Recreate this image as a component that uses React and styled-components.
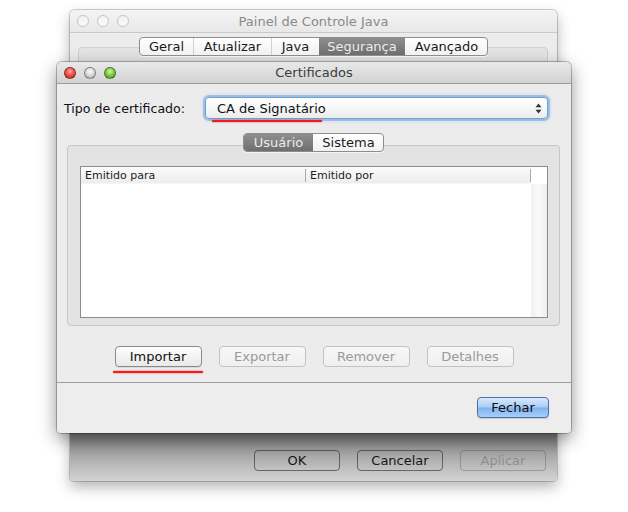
import React from 'react';
import styled, { createGlobalStyle, css } from 'styled-components';

const GlobalStyle = createGlobalStyle`
  html, body {
    margin: 0;
    padding: 0;
    background: #ffffff;
  }
  body {
    font-family: "DejaVu Sans", "Liberation Sans", sans-serif;
    -webkit-font-smoothing: antialiased;
  }
`;

const Desktop = styled.div`
  position: relative;
  width: 628px;
  height: 512px;
  overflow: hidden;
  background: #fff;
`;

const Window = styled.div`
  position: absolute;
  left: ${p => p.$left}px;
  top: ${p => p.$top}px;
  width: ${p => p.$width}px;
  height: ${p => p.$height}px;
  box-sizing: border-box;
  display: flex;
  flex-direction: column;
  background: #ececec;
  border-radius: 5px 5px 4px 4px;
  box-shadow: ${p => p.$front
    ? '0 6px 18px rgba(0,0,0,0.45), 0 0 0 1px rgba(0,0,0,0.25)'
    : '0 6px 14px rgba(0,0,0,0.3), 0 0 0 1px rgba(0,0,0,0.18)'};
  overflow: hidden;
`;

const TitleBar = styled.div`
  position: relative;
  flex: none;
  height: ${p => p.$h}px;
  box-sizing: border-box;
  display: flex;
  align-items: center;
  justify-content: center;
  background: ${p => p.$active
    ? 'linear-gradient(#e9e9e9, #d2d2d2)'
    : 'linear-gradient(#f4f4f4, #e8e8e8)'};
  border-bottom: 1px solid ${p => p.$active ? '#9c9c9c' : '#c9c9c9'};
  font-size: 13px;
  color: ${p => p.$active ? '#3c3c3c' : '#8a8a8a'};
`;

const Lights = styled.div`
  position: absolute;
  left: ${p => p.$left}px;
  top: 0;
  bottom: 0;
  display: flex;
  align-items: center;
  gap: 8px;
`;

const lightColors = {
  red: 'radial-gradient(circle at 50% 35%, #ffb0a8 0%, #f0534a 45%, #b8201a 100%)',
  gray: 'radial-gradient(circle at 50% 35%, #fbfbfb 0%, #d6d6d6 50%, #9d9d9d 100%)',
  green: 'radial-gradient(circle at 50% 35%, #d6f7a8 0%, #7fcf46 45%, #3d8e1a 100%)',
};

const Light = styled.span`
  width: 12px;
  height: 12px;
  border-radius: 50%;
  box-sizing: border-box;
  ${p => p.$hollow
    ? css`
      border: 1px solid #c4c4c4;
      background: linear-gradient(#f2f2f2, #fafafa);
    `
    : css`
      border: 1px solid rgba(0,0,0,0.35);
      background: ${lightColors[p.$color]};
    `}
`;

const TabStrip = styled.div`
  position: relative;
  z-index: 1;
  flex: none;
  display: flex;
  justify-content: center;
`;

const Segments = styled.div`
  display: flex;
  height: 19px;
  box-sizing: border-box;
  border: 1px solid #8d8d8d;
  border-radius: 4px;
  overflow: hidden;
  background: linear-gradient(#ffffff, #f1f1f1);
  box-shadow: 0 1px 0 rgba(255,255,255,0.6);
`;

const Segment = styled.div`
  width: ${p => p.$w}px;
  box-sizing: border-box;
  display: flex;
  align-items: center;
  justify-content: center;
  font-size: 13px;
  color: #1a1a1a;
  border-left: 1px solid ${p => p.$divider ? '#d0d0d0' : 'transparent'};
  &:first-child { border-left: none; }
  ${p => p.$selected && css`
    background: linear-gradient(#8f8f8f, #6e6e6e);
    color: #ececec;
    border-left: none;
  `}
`;

const BackGroup = styled.div`
  flex: 1;
  margin: -9px 9px 0 8px;
  border: 1px solid #cfcfcf;
  border-radius: 4px;
  background: #e4e4e4;
`;

const BackFooter = styled.div`
  flex: none;
  height: 48px;
  box-sizing: border-box;
  display: flex;
  justify-content: flex-end;
  align-items: flex-start;
  gap: 17px;
  padding: 17px 11px 0 0;
  background: linear-gradient(#7a7a7a, #a8a8a8 45%, #d4d4d4);
`;

const ShadowButton = styled.div`
  width: 86px;
  height: 21px;
  box-sizing: border-box;
  display: flex;
  align-items: center;
  justify-content: center;
  border: 1px solid ${p => p.$disabled ? 'rgba(80,80,80,0.35)' : 'rgba(40,40,40,0.6)'};
  border-radius: 4px;
  font-size: 13px;
  color: ${p => p.$disabled ? '#8e8e8e' : '#161616'};
`;

const BackSpacer = styled.div`
  flex: none;
  height: 4px;
`;

const FrontBody = styled.div`
  position: relative;
  flex: 1;
  display: flex;
  flex-direction: column;
`;

const TypeRow = styled.div`
  display: flex;
  align-items: center;
  margin: 13px 23px 0 7px;
`;

const Label = styled.div`
  width: 141px;
  flex: none;
  font-size: 12.6px;
  color: #111;
`;

const Combo = styled.div`
  flex: 1;
  height: 22px;
  box-sizing: border-box;
  display: flex;
  align-items: center;
  justify-content: space-between;
  padding: 0 5px 0 11px;
  border: 1px solid #6f9fd6;
  border-radius: 4px;
  background: linear-gradient(#ffffff, #f6f6f6 55%, #ececec);
  box-shadow: 0 0 0 2px rgba(120,165,225,0.55), 0 0 3px 2px rgba(120,165,225,0.35);
  font-size: 13px;
  color: #111;
`;

const GroupArea = styled.div`
  display: flex;
  flex-direction: column;
  margin: 14px 11px 0 10px;
`;

const Group = styled.div`
  margin-top: -7px;
  height: 181px;
  box-sizing: border-box;
  padding: 20px 11px 7px 12px;
  border: 1px solid #c6c6c6;
  border-radius: 4px;
  background: #e3e3e3;
`;

const Table = styled.div`
  height: 152px;
  box-sizing: border-box;
  display: flex;
  flex-direction: column;
  border: 1px solid #8c8c8c;
  background: #fff;
`;

const HeaderRow = styled.div`
  flex: none;
  height: 16px;
  display: grid;
  grid-template-columns: 225px 225px 1fr;
  background: linear-gradient(#fbfbfb, #ededed);
  border-bottom: 1px solid #f6f6f6;
`;

const HeaderCell = styled.div`
  display: flex;
  align-items: center;
  padding-left: 4px;
  font-size: 11px;
  color: #1c1c1c;
  border-right: ${p => p.$last ? 'none' : '1px solid #a9a9a9'};
  margin: 2px 0;
  ${p => p.$last && css`background: #fff; margin: 0;`}
`;

const TableBody = styled.div`
  flex: 1;
  display: flex;
`;

const ListArea = styled.div`
  flex: 1;
`;

const ScrollTrack = styled.div`
  width: 16px;
  background: linear-gradient(90deg, #f1f1f1, #fafafa 50%, #ededed);
`;

const ButtonRow = styled.div`
  display: flex;
  justify-content: center;
  gap: 17px;
  margin-top: 20px;
`;

const PushButton = styled.div`
  width: ${p => p.$w || 87}px;
  height: 21px;
  box-sizing: border-box;
  display: flex;
  align-items: center;
  justify-content: center;
  border-radius: 4px;
  font-size: 13px;
  ${p => p.$variant === 'disabled' && css`
    border: 1px solid #c3c3c3;
    background: linear-gradient(#f7f7f7, #efefef);
    color: #9a9a9a;
  `}
  ${p => p.$variant === 'normal' && css`
    border: 1px solid #8a8a8a;
    background: linear-gradient(#ffffff, #f3f3f3 50%, #e9e9e9);
    color: #121212;
    box-shadow: 0 1px 0 rgba(0,0,0,0.08);
  `}
  ${p => p.$variant === 'default' && css`
    border: 1px solid #4f6fa6;
    background: linear-gradient(#d9e9fc, #a9cdf6 48%, #7fb2ee 52%, #a7d0fa);
    color: #0d0d0d;
    box-shadow: 0 1px 1px rgba(0,0,0,0.15);
  `}
`;

const Footer = styled.div`
  margin-top: 15px;
  flex: 1;
  display: flex;
  justify-content: flex-end;
  align-items: flex-start;
  padding: 14px 22px 0 0;
  border-top: 1px solid #9e9e9e;
  background: #ededed;
`;

const RedMark = styled.div`
  position: absolute;
  left: ${p => p.$left}px;
  top: ${p => p.$top}px;
  width: ${p => p.$width}px;
  height: 2px;
  border-radius: 2px;
  background: #ee1c1c;
  box-shadow: 0 0 1.5px rgba(238,28,28,0.9);
`;

function Arrows() {
  return (
    <svg width="7" height="11" viewBox="0 0 7 11">
      <path d="M3.5 0.5 L6.5 4.2 L0.5 4.2 Z" fill="#333" />
      <path d="M3.5 10.5 L6.5 6.8 L0.5 6.8 Z" fill="#333" />
    </svg>
  );
}

export default function App() {
  return (
    <Desktop>
      <GlobalStyle />

      <Window $left={70} $top={10} $width={487} $height={471}>
        <TitleBar $h={23}>
          <Lights $left={7}>
            <Light $hollow />
            <Light $hollow />
            <Light $hollow />
          </Lights>
          Painel de Controle Java
        </TitleBar>
        <BackSpacer />
        <TabStrip>
          <Segments>
            <Segment $w={53}>Geral</Segment>
            <Segment $w={78} $divider>Atualizar</Segment>
            <Segment $w={48} $divider>Java</Segment>
            <Segment $w={86} $selected>Segurança</Segment>
            <Segment $w={82}>Avançado</Segment>
          </Segments>
        </TabStrip>
        <BackGroup />
        <BackSpacer />
        <BackFooter>
          <ShadowButton>OK</ShadowButton>
          <ShadowButton>Cancelar</ShadowButton>
          <ShadowButton $disabled>Aplicar</ShadowButton>
        </BackFooter>
      </Window>

      <Window $front $left={57} $top={62} $width={514} $height={371}>
        <TitleBar $h={22} $active>
          <Lights $left={7}>
            <Light $color="red" />
            <Light $color="gray" />
            <Light $color="green" />
          </Lights>
          Certificados
        </TitleBar>
        <FrontBody>
          <TypeRow>
            <Label>Tipo de certificado:</Label>
            <Combo>
              <span>CA de Signatário</span>
              <Arrows />
            </Combo>
          </TypeRow>

          <GroupArea>
            <TabStrip>
              <Segments>
                <Segment $w={69} $selected>Usuário</Segment>
                <Segment $w={70}>Sistema</Segment>
              </Segments>
            </TabStrip>
            <Group>
              <Table>
                <HeaderRow>
                  <HeaderCell>Emitido para</HeaderCell>
                  <HeaderCell>Emitido por</HeaderCell>
                  <HeaderCell $last />
                </HeaderRow>
                <TableBody>
                  <ListArea />
                  <ScrollTrack />
                </TableBody>
              </Table>
            </Group>
          </GroupArea>

          <ButtonRow>
            <PushButton $variant="normal">Importar</PushButton>
            <PushButton $variant="disabled">Exportar</PushButton>
            <PushButton $variant="disabled">Remover</PushButton>
            <PushButton $variant="disabled">Detalhes</PushButton>
          </ButtonRow>

          <Footer>
            <PushButton $variant="default" $w={72}>Fechar</PushButton>
          </Footer>

          <RedMark $left={155} $top={36} $width={110} />
          <RedMark $left={56} $top={287} $width={90} />
        </FrontBody>
      </Window>
    </Desktop>
  );
}
